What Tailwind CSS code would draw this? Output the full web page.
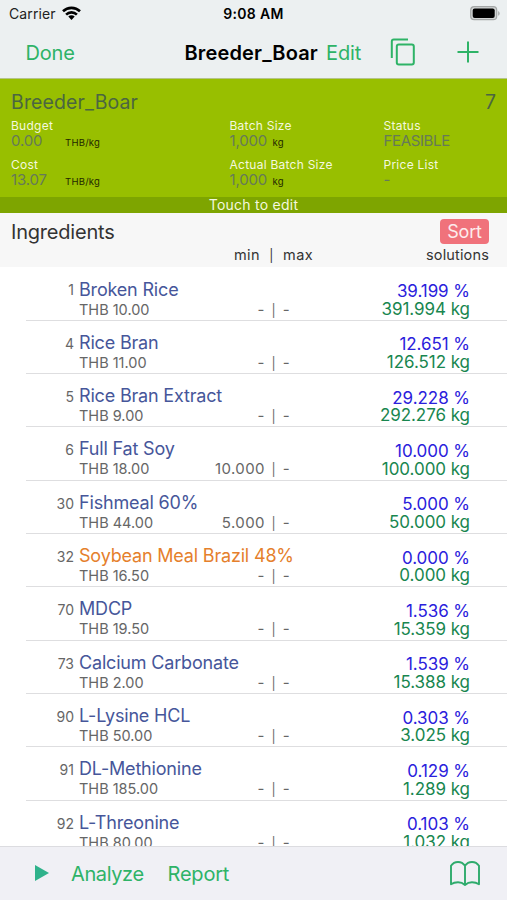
<!DOCTYPE html>
<html lang="en">
<head>
<meta charset="utf-8">
<title>Breeder_Boar</title>
<script src="https://cdn.jsdelivr.net/npm/@tailwindcss/browser@4"></script>
</head>
<body class="w-[507px] h-[900px] overflow-hidden bg-white font-['Inter','Liberation_Sans',sans-serif] whitespace-nowrap flex flex-col">
<header class="h-[79px] shrink-0 bg-[#ecf0f1] border-b border-[#b5c48a]">
  <div class="h-[27px] grid grid-cols-3 items-center px-[9px] text-[14px] text-[#222]">
    <div class="flex items-center gap-[6px]"><span class="tracking-[0.1px]">Carrier</span>
      <svg class="w-[19px] h-[14px] -mt-[2px]" viewBox="0 0 19 14"><g fill="none" stroke="#000" stroke-width="2.6"><path d="M1 5.3a12.2 12.2 0 0 1 17 0"/><path d="M4.1 8.6a7.7 7.7 0 0 1 10.8 0"/></g><path d="M6.3 10.6a4.5 4.5 0 0 1 6.4 0L9.5 14Z"/></svg>
    </div>
    <div class="text-center font-semibold text-black tracking-[0.35px]">9:08 AM</div>
    <div class="flex justify-end"><svg class="w-[30px] h-[15px] -mr-[2px] -mt-[1px]" viewBox="0 0 30 15"><rect x=".7" y=".7" width="26" height="13" rx="3.5" fill="#d2d5d5" stroke="#a4a7a7" stroke-width="1.2"/><rect x="2.7" y="2.5" width="22" height="9.4" rx="2"/><path d="M28.2 5v4.8q1.4-.8 1.4-2.4T28.2 5" fill="#a4a7a7"/></svg></div>
  </div>
  <div class="h-[50px] flex items-center text-[20px] text-[#2eb367]">
    <div class="w-[184px] pl-[25.5px] tracking-[-0.2px] pt-px">Done</div>
    <div class="w-[142px] font-semibold text-black tracking-[0.15px] pt-px pl-[0.5px]">Breeder_Boar</div>
    <div class="w-[64px] tracking-[-0.1px] pt-px">Edit</div>
    <svg class="w-[25px] h-[28px]" viewBox="0 0 25 28" fill="none" stroke="#2eb367" stroke-width="2"><path d="M1.8 20V3.5q0-2 2-2H18"/><rect x="6.8" y="6.5" width="17" height="20" rx="2"/></svg>
    <svg class="w-[22px] h-[22px] ml-[42px]" viewBox="0 0 22 22" stroke="#2eb367" stroke-width="2"><path d="M.5 11h21M11 .5v21"/></svg>
  </div>
</header>
<section class="h-[118px] shrink-0 bg-[#98bf00] pt-[11px] px-[11px]">
  <div class="flex justify-between text-[19.5px] leading-[24px] text-[#4b6641]"><span class="tracking-[0.12px]">Breeder_Boar</span><span>7</span></div>
  <div class="grid grid-cols-[218.5px_154px_1fr] text-[12px] text-[#f4f8df] mt-[4px] gap-y-[9px] tracking-[0.25px]">
    <div><div class="leading-[15px]">Budget</div><div class="flex items-baseline h-[15px] text-[15px] leading-[16px] text-[#667a58]"><span class="w-[54px] tracking-[-0.15px]">0.00</span><span class="text-[9.5px] text-[#1f2800]">THB/kg</span></div></div>
    <div><div class="leading-[15px]">Batch Size</div><div class="flex items-baseline h-[15px] text-[15px] leading-[16px] text-[#667a58]"><span class="w-[43px] tracking-[-0.15px]">1,000</span><span class="text-[9.5px] text-[#1f2800]">kg</span></div></div>
    <div><div class="leading-[15px]">Status</div><div class="h-[15px] text-[15px] leading-[16px] text-[#667a58] tracking-[-0.35px]">FEASIBLE</div></div>
    <div><div class="leading-[15px]">Cost</div><div class="flex items-baseline h-[15px] text-[15px] leading-[16px] text-[#667a58]"><span class="w-[54px] tracking-[-0.15px]">13.07</span><span class="text-[9.5px] text-[#1f2800]">THB/kg</span></div></div>
    <div><div class="leading-[15px]">Actual Batch Size</div><div class="flex items-baseline h-[15px] text-[15px] leading-[16px] text-[#667a58]"><span class="w-[43px] tracking-[-0.15px]">1,000</span><span class="text-[9.5px] text-[#1f2800]">kg</span></div></div>
    <div><div class="leading-[15px]">Price List</div><div class="h-[15px] text-[15px] leading-[16px] text-[#667a58]">-</div></div>
  </div>
</section>
<div class="h-[16px] shrink-0 bg-[#7ea500] text-[#f4f8df] text-center text-[14px] leading-[16px] tracking-[0.25px]">Touch to edit</div>
<section class="h-[54px] shrink-0 bg-[#f7f7f7] pt-[5px] text-[#333]">
  <div class="h-[26px] flex items-center justify-between pl-[11px] pr-[18px]"><h1 class="text-[20px] tracking-[-0.2px] pt-px">Ingredients</h1><span class="w-[49px] h-[25px] rounded-[4px] bg-[#f0727b] text-[#fdeced] text-[18px] leading-[25px] text-center tracking-[-0.2px]">Sort</span></div>
  <div class="flex text-[14.5px] leading-[21px] pl-[234px] pr-[18px] justify-between"><span class="whitespace-pre tracking-[0.4px]">min  <span class="text-[12.5px] px-[0.3px]">|</span>  max</span><span class="tracking-[0.15px]">solutions</span></div>
</section>
<main id="rows" class="flex-1 min-h-0 overflow-hidden pt-[0.5px]"></main>
<footer class="h-[54px] shrink-0 bg-[#f0f0f5] border-t border-[#dcdce0] flex items-center pl-[34.5px] pr-[27px] text-[20px] text-[#2eb367]">
  <svg class="w-[14px] h-[16px] -mt-[2px]" viewBox="0 0 14 16"><path d="M0 0l14 8-14 8Z" fill="#2fb28b"/></svg>
  <span class="ml-[22.5px] w-[96.5px] tracking-[-0.4px]">Analyze</span><span class="tracking-[-0.2px]">Report</span>
  <svg class="w-[30px] h-[25px] ml-auto" viewBox="0 0 30 25" fill="none" stroke="#2eab6c" stroke-width="1.9" stroke-linejoin="round" stroke-linecap="round"><path d="M15 4.8Q12.5 1 8 1 3.5 1 1 4.8V23.2Q4 21.3 8 21.3 12 21.3 15 24 18 21.3 22 21.3 26 21.3 29 23.2V4.8Q26.5 1 22 1 17.5 1 15 4.8V24"/></svg>
</footer>
<script>
const data = [
  ['1','Broken Rice','10.00','-','39.199','391.994'],
  ['4','Rice Bran','11.00','-','12.651','126.512'],
  ['5','Rice Bran Extract','9.00','-','29.228','292.276'],
  ['6','Full Fat Soy','18.00','10.000','10.000','100.000'],
  ['30','Fishmeal 60%','44.00','5.000','5.000','50.000'],
  ['32','Soybean Meal Brazil 48%','16.50','-','0.000','0.000'],
  ['70','MDCP','19.50','-','1.536','15.359'],
  ['73','Calcium Carbonate','2.00','-','1.539','15.388'],
  ['90','L-Lysine HCL','50.00','-','0.303','3.025'],
  ['91','DL-Methionine','185.00','-','0.129','1.289'],
  ['92','L-Threonine','80.00','-','0.103','1.032']
];
document.getElementById('rows').innerHTML = data.map(([id, name, price, min, pct, kg]) => `
<div class="ml-[26px] h-[53.33px] border-b border-[#dedee0] flex text-[#666] pr-[37px]">
  <div class="w-[48px] text-right text-[14px] leading-[20px] pt-[12.8px]">${id}</div>
  <div class="w-[216px] pl-[5px] pt-[12px]">
    <div class="text-[18px] leading-[20px] tracking-[-0.18px] ${name.startsWith('Soybean') ? 'text-[#e5802c]' : 'text-[#46569a]'}">${name}</div>
    <div class="flex justify-between text-[14.5px] leading-[20px]"><span>THB ${price}</span><span class="text-[15px] whitespace-pre tracking-[0.4px] [word-spacing:2px]">${min} <span class="text-[12.5px]">|</span> -</span></div>
  </div>
  <div class="ml-auto text-right text-[17px] leading-[17.5px] pt-[15.6px] tracking-[-0.05px]"><div class="text-[#2a20dc]">${pct} %</div><div class="text-[#18864f]">${kg} kg</div></div>
</div>`).join('');
</script>
</body>
</html>
